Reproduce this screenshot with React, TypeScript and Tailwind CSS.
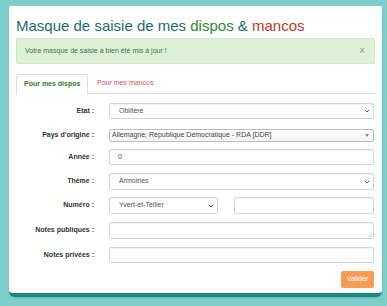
const Chevron = () => (
  <svg width="6" height="4" viewBox="0 0 6 4" className="shrink-0">
    <path d="M0.8 0.8 L3 3 L5.2 0.8" fill="none" stroke="#555" strokeWidth="1" />
  </svg>
);

const Field = ({ children, className = "" }: { children?: React.ReactNode; className?: string }) => (
  <div
    className={`flex items-center border border-[#d4d4d4] rounded-[2px] bg-white text-[7px] text-[#555] shadow-[inset_0_1px_1px_rgba(0,0,0,0.05)] ${className}`}
  >
    {children}
  </div>
);

const Label = ({ children }: { children: React.ReactNode }) => (
  <div className="w-[79px] shrink-0 text-right text-[7px] font-bold text-[#333] pr-[1px]">{children}</div>
);

export default function App() {
  return (
    <div
      className="w-[387px] h-[306px] overflow-hidden bg-[#7ecec9] pt-[6px] pl-[9px]"
      style={{ fontFamily: '"Liberation Sans", Arial, sans-serif' }}
    >
      <div className="w-[373px] bg-white rounded-t-[2px] rounded-b-[6px] border-b-4 border-[#1b8783] px-[7px] pt-[10px] pb-[5px] shadow-[0_1px_2px_rgba(0,0,0,0.15)]">
        <h1 className="text-[15px] leading-[20px] text-[#1e6d6b]">
          Masque de saisie de mes <span className="text-[#2f8a2f]">dispos</span> &amp;{" "}
          <span className="text-[#c0392b]">mancos</span>
        </h1>

        <div className="mt-[2px] h-[26px] flex items-center justify-between border border-[#d2e8c4] bg-[#dff0d8] rounded-[2px] pl-[8px] pr-[9px] text-[7px] text-[#3c763d]">
          <span>Votre masque de saisie a bien été mis à jour !</span>
          <span className="text-[10px] leading-none text-[#a4b2a0] font-bold">×</span>
        </div>

        <div className="mt-[10px] flex border-b border-[#e0e0e0] h-[20px]">
          <div className="w-[72px] h-[21px] border border-[#e0e0e0] border-b-white bg-white rounded-t-[2px] flex items-center pl-[7px] text-[7px] font-bold text-[#2e7d32]">
            Pour mes dispos
          </div>
          <div className="flex items-center pl-[9px] text-[7px] text-[#d9534f]">Pour mes mancos</div>
        </div>

        <div className="flex flex-col">
          <div className="mt-[9px] flex items-center h-[16px]">
            <Label>Etat :</Label>
            <Field className="ml-[14px] w-[265px] h-full justify-between pl-[9px] pr-[3px]">
              <span>Oblitéré</span>
              <Chevron />
            </Field>
          </div>

          <div className="mt-[10px] flex items-center h-[13px]">
            <Label>Pays d'origine :</Label>
            <div className="ml-[14px] w-[265px] h-full flex items-center justify-between border border-[#bdbdbd] rounded-[2px] bg-gradient-to-b from-white to-[#f3f3f3] pl-[2px] pr-[4px] text-[7px] text-[#444]">
              <span>Allemagne, République Démocratique - RDA [DDR]</span>
              <svg width="4" height="3" viewBox="0 0 4 3">
                <path d="M0 0 L4 0 L2 3 Z" fill="#888" />
              </svg>
            </div>
          </div>

          <div className="mt-[7px] flex items-center h-[16px]">
            <Label>Année :</Label>
            <Field className="ml-[14px] w-[265px] h-full pl-[8px]">0</Field>
          </div>

          <div className="mt-[8px] flex items-center h-[17px]">
            <Label>Thème :</Label>
            <Field className="ml-[14px] w-[265px] h-full justify-between pl-[9px] pr-[3px]">
              <span>Armoiries</span>
              <Chevron />
            </Field>
          </div>

          <div className="mt-[7px] flex items-center h-[17px]">
            <Label>Numéro :</Label>
            <Field className="ml-[14px] w-[109px] h-full justify-between pl-[9px] pr-[3px]">
              <span>Yvert-et-Tellier</span>
              <Chevron />
            </Field>
            <Field className="ml-[16px] w-[140px] h-full" />
          </div>

          <div className="mt-[8px] flex items-center h-[17px]">
            <Label>Notes publiques :</Label>
            <Field className="ml-[14px] w-[265px] h-full relative">
              <svg width="4" height="4" viewBox="0 0 4 4" className="absolute right-[1px] bottom-[1px]">
                <path d="M0.5 4 L4 0.5 M2.3 4 L4 2.3" stroke="#999" strokeWidth="0.6" />
              </svg>
            </Field>
          </div>

          <div className="mt-[8px] flex items-center h-[16px]">
            <Label>Notes privées :</Label>
            <Field className="ml-[14px] w-[265px] h-full" />
          </div>

          <div className="mt-[8px] flex justify-end pr-[1px]">
            <div className="w-[33px] h-[17px] flex items-center justify-center rounded-[2px] bg-[#f79b52] border border-[#f0a062] text-[7px] text-white">
              Valider
            </div>
          </div>
        </div>
      </div>
    </div>
  );
}
